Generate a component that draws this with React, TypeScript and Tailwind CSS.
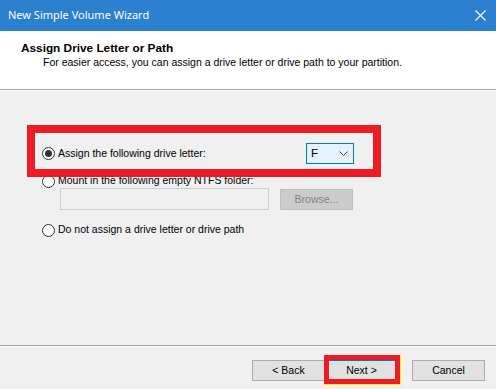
import React from 'react';

// New Simple Volume Wizard — "Assign Drive Letter or Path" page, with red highlight boxes.

function Radio({ checked }: { checked?: boolean }) {
  return (
    <span className="flex h-[13px] w-[13px] shrink-0 items-center justify-center rounded-full border border-[#333333] bg-white">
      {checked && <span className="h-[7px] w-[7px] rounded-full bg-[#333333]" />}
    </span>
  );
}

function Button({ label, primary }: { label: string; primary?: boolean }) {
  return (
    <button
      className={`flex h-[21px] w-[73px] items-center justify-center border bg-[#e1e1e1] text-[10.5px] text-black ${
        primary ? 'border-[#0078d7]' : 'border-[#adadad]'
      }`}
    >
      {label}
    </button>
  );
}

export default function App() {
  return (
    <div
      className="relative h-[389px] w-[496px] overflow-hidden bg-[#f0f0f0] text-black"
      style={{ fontFamily: '"Liberation Sans", Arial, sans-serif' }}
    >
      {/* title bar */}
      <div className="flex h-[31px] items-center justify-between bg-[#2b80cf] pl-[8px] pr-[10px] text-white">
        <span className="text-[11px]" style={{ fontFamily: '"Noto Sans", "Liberation Sans", sans-serif' }}>
          New Simple Volume Wizard
        </span>
        <svg width="11" height="11" viewBox="0 0 11 11" className="mt-[-1px]">
          <path d="M0.5 0.5 L10.5 10.5 M10.5 0.5 L0.5 10.5" stroke="white" strokeWidth="1.1" fill="none" />
        </svg>
      </div>

      {/* header */}
      <div className="h-[58px] bg-white pl-[21px] pt-[10px]">
        <div className="text-[11.8px] font-bold leading-[14px]">Assign Drive Letter or Path</div>
        <div className="mt-[1px] pl-[22px] text-[10.5px] leading-[13px]">
          For easier access, you can assign a drive letter or drive path to your partition.
        </div>
      </div>
      <div className="h-px bg-[#a0a0a0]" />
      <div className="h-px bg-white" />

      {/* body */}
      <div className="flex h-[254px] flex-col pl-[42px] pt-[52px] text-[10.5px]">
        <div className="flex h-[21px] items-center">
          <div className="flex w-[264px] items-center gap-[3px]">
            <Radio checked />
            <span>Assign the following drive letter:</span>
          </div>
          <div className="flex h-[21px] w-[48px] items-center justify-between border border-[#0078d7] bg-[#e5f1fb] pl-[4px] pr-[5px]">
            <span className="text-[11.5px]">F</span>
            <svg width="9" height="5" viewBox="0 0 9 5">
              <path d="M0.5 0.5 L4.5 4.5 L8.5 0.5" stroke="#444" strokeWidth="1" fill="none" />
            </svg>
          </div>
        </div>

        <div className="mt-[9px] flex h-[16px] items-center gap-[3px]">
          <Radio />
          <span>Mount in the following empty NTFS folder:</span>
        </div>

        <div className="mt-[-1px] flex gap-[11px] pl-[18px]">
          <div className="h-[22px] w-[209px] border border-[#cccccc] bg-[#f0f0f0]" />
          <div className="mt-[1px] flex h-[21px] w-[73px] items-center justify-center border border-[#bfbfbf] bg-[#cccccc] text-[#838383]">
            Browse...
          </div>
        </div>

        <div className="mt-[12px] flex h-[16px] items-center gap-[3px]">
          <Radio />
          <span>Do not assign a drive letter or drive path</span>
        </div>
      </div>

      <div className="h-px bg-[#a0a0a0]" />
      <div className="h-px bg-white" />

      {/* footer */}
      <div className="flex pl-[252px] pt-[13px]">
        <Button label="< Back" />
        <Button label="Next >" primary />
        <div className="ml-[14px]">
          <Button label="Cancel" />
        </div>
      </div>

      {/* red highlight annotations */}
      <div className="absolute left-[27px] top-[125px] h-[52px] w-[354px] border-[8px] border-[#ed1c24]" />
      <div className="absolute left-[324px] top-[355px] h-[30px] w-[77px] border-r border-b border-[#fff200]">
        <div className="h-full w-full border-[5px] border-[#ed1c24]" />
      </div>
    </div>
  );
}
